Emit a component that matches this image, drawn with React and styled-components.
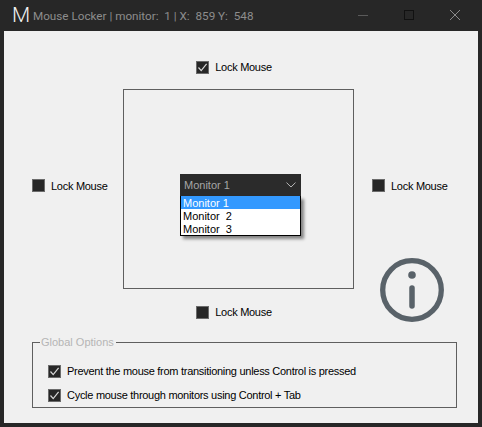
import React from 'react';
import styled, { createGlobalStyle } from 'styled-components';

const GlobalStyle = createGlobalStyle`
    html, body {
        margin: 0;
        padding: 0;
        background: #272727;
    }
`;

const Window = styled.div`
    width: 482px;
    height: 427px;
    box-sizing: border-box;
    display: flex;
    flex-direction: column;
    background: #272727;
    font-family: "Liberation Sans", Arial, sans-serif;
    font-size: 11px;
    color: #000;
    overflow: hidden;
`;

const TitleBar = styled.header`
    height: 31px;
    flex: none;
    display: flex;
    align-items: center;
    padding: 0 4px 0 12px;
`;

const AppLogo = styled.span`
    width: 16px;
    font-family: Roboto, sans-serif;
    font-size: 21px;
    line-height: 31px;
    color: #f2f2f2;
    font-weight: 300;
`;

const TitleText = styled.span`
    margin-left: 5px;
    font-family: Roboto, sans-serif;
    color: #8d8d8d;
    font-size: 11.7px;
    white-space: pre;
`;

const WindowButtons = styled.div`
    margin-left: auto;
    display: flex;
    align-items: center;
`;

const WindowButton = styled.svg`
    width: 46px;
    height: 31px;
    display: block;
`;

const Client = styled.main`
    flex: 1;
    margin: 0 4px 4px;
    background: #f0f0f0;
    display: flex;
    flex-direction: column;
`;

const LockArea = styled.div`
    display: grid;
    grid-template-columns: 119px 231px 1fr;
    grid-template-rows: 58px 200px 47px;
`;

const TopCell = styled.div`
    grid-column: 2;
    grid-row: 1;
    display: flex;
    justify-content: center;
    align-items: flex-end;
    padding: 0 9px 15px 0;
`;

const BottomCell = styled.div`
    grid-column: 2;
    grid-row: 3;
    display: flex;
    justify-content: center;
    padding: 16px 9px 0 0;
`;

const LeftCell = styled.div`
    grid-column: 1;
    grid-row: 2;
    display: flex;
    align-items: center;
    padding-left: 28px;
    padding-bottom: 7px;
`;

const RightCell = styled.div`
    grid-column: 3;
    grid-row: 2;
    display: flex;
    align-items: center;
    padding-left: 18px;
    padding-bottom: 7px;
`;

const MonitorBox = styled.div`
    grid-column: 2;
    grid-row: 2;
    border: 1px solid #5f5f5f;
    box-sizing: border-box;
    display: flex;
    justify-content: center;
    padding: 84px 0 0 4px;
`;

const InfoCell = styled.div`
    grid-column: 3;
    grid-row: 2 / 4;
    align-self: end;
    padding: 0 0 14px 26px;
    line-height: 0;
`;

const Check = styled.label`
    display: inline-flex;
    align-items: center;
    gap: 6px;
    height: 14px;
    white-space: nowrap;
    letter-spacing: -0.28px;
`;

const CheckBox = styled.span`
    width: 13px;
    height: 13px;
    box-sizing: border-box;
    flex: none;
    background: #272727;
    border: 1px solid #6b6b6b;
    display: flex;
    align-items: center;
    justify-content: center;
`;

const Dropdown = styled.div`
    position: relative;
    width: 121px;
    height: 22px;
`;

const DropdownHead = styled.div`
    height: 22px;
    box-sizing: border-box;
    background: #2b2b2b;
    color: #a6a6a6;
    padding: 0 5px 0 4px;
    display: flex;
    align-items: center;
    justify-content: space-between;
`;

const DropdownList = styled.ul`
    position: absolute;
    top: 22px;
    left: 0;
    width: 100%;
    box-sizing: border-box;
    margin: 0;
    padding: 0;
    list-style: none;
    background: #fff;
    border: 1px solid #000;
    border-top: none;
    box-shadow: 3px 3px 3px rgba(0, 0, 0, 0.45);
`;

const DropdownItem = styled.li`
    height: 13px;
    line-height: 15px;
    padding-left: 2px;
    white-space: pre;
    background: ${p => p.$selected ? '#3399ff' : 'transparent'};
    color: ${p => p.$selected ? '#fff' : '#000'};
`;

const OptionsGroup = styled.fieldset`
    margin: 0 21px 0 28px;
    padding: 16px 0 0 15px;
    height: 72px;
    box-sizing: border-box;
    border: 1px solid #5f5f5f;
    border-radius: 0;
    display: flex;
    flex-direction: column;
    gap: 10px;
    min-width: 0;
`;

const OptionsLegend = styled.legend`
    margin-left: -8px;
    padding: 0 2px 0 1px;
    color: #b5b5b5;
    line-height: 12px;
`;

const Tick = () => (
    <svg width="11" height="11" viewBox="0 0 11 11" fill="none">
        <path d="M1.5 5.5 L4.2 8.6 L9.6 1.8" stroke="#d8d8d8" strokeWidth="1.2" />
    </svg>
);

const LockCheck = ({ checked, children }) => (
    <Check>
        <CheckBox>{checked && <Tick />}</CheckBox>
        {children}
    </Check>
);

const App = () => (
    <Window>
        <GlobalStyle />
        <TitleBar>
            <AppLogo>M</AppLogo>
            <TitleText>Mouse Locker | monitor:  1 | X:  859 Y:  548</TitleText>
            <WindowButtons>
                <WindowButton viewBox="0 0 46 31">
                    <path d="M18 15.5 H28" stroke="#5a5a5a" strokeWidth="1" />
                </WindowButton>
                <WindowButton viewBox="0 0 46 31">
                    <rect x="18.5" y="10.5" width="9" height="9" fill="none" stroke="#111" strokeWidth="1" />
                </WindowButton>
                <WindowButton viewBox="0 0 46 31">
                    <path d="M18 10 L28 20 M28 10 L18 20" stroke="#8a8a8a" strokeWidth="1" />
                </WindowButton>
            </WindowButtons>
        </TitleBar>
        <Client>
            <LockArea>
                <TopCell><LockCheck checked>Lock Mouse</LockCheck></TopCell>
                <LeftCell><LockCheck>Lock Mouse</LockCheck></LeftCell>
                <MonitorBox>
                    <Dropdown>
                        <DropdownHead>
                            Monitor 1
                            <svg width="10" height="6" viewBox="0 0 10 6" fill="none">
                                <path d="M0.5 0.6 L5 5 L9.5 0.6" stroke="#b5b5b5" strokeWidth="1" />
                            </svg>
                        </DropdownHead>
                        <DropdownList>
                            <DropdownItem $selected>Monitor 1</DropdownItem>
                            <DropdownItem>Monitor  2</DropdownItem>
                            <DropdownItem>Monitor  3</DropdownItem>
                        </DropdownList>
                    </Dropdown>
                </MonitorBox>
                <RightCell><LockCheck>Lock Mouse</LockCheck></RightCell>
                <InfoCell>
                    <svg width="64" height="64" viewBox="0 0 64 64" fill="none" stroke="#596269">
                        <circle cx="32" cy="32" r="29.3" strokeWidth="5.3" />
                        <circle cx="32" cy="17" r="3.8" fill="#596269" stroke="none" />
                        <path d="M32 30 V48" strokeWidth="5.5" strokeLinecap="round" />
                    </svg>
                </InfoCell>
                <BottomCell><LockCheck>Lock Mouse</LockCheck></BottomCell>
            </LockArea>
            <OptionsGroup>
                <OptionsLegend>Global Options</OptionsLegend>
                <LockCheck checked>Prevent the mouse from transitioning unless Control is pressed</LockCheck>
                <LockCheck checked>Cycle mouse through monitors using Control + Tab</LockCheck>
            </OptionsGroup>
        </Client>
    </Window>
);

export default App;
